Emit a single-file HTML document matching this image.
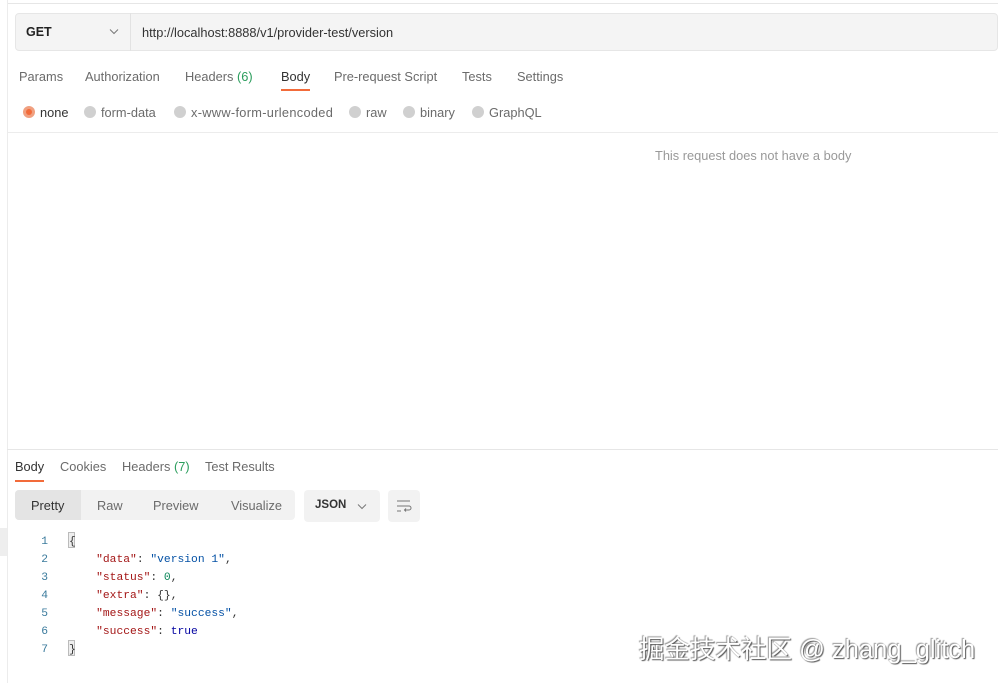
<!DOCTYPE html>
<html><head><meta charset="utf-8"><style>
*{box-sizing:border-box;margin:0;padding:0}
body{width:998px;height:683px;background:#fff;font-family:"Liberation Sans","Noto Sans CJK SC",sans-serif;font-size:12.8px;color:#6b6b6b;position:relative;overflow:hidden}
.a{position:absolute;white-space:nowrap}
.radio{position:absolute;width:12px;height:12px;border-radius:50%;background:#d0d0d0;top:106px}
.mono{font-family:"Liberation Mono","DejaVu Sans Mono",monospace;font-size:11.3px}
</style></head><body>
<div class="a" style="left:7px;top:3px;width:991px;height:1px;background:#e6e6e6"></div>
<div class="a" style="left:7px;top:0;width:1px;height:683px;background:#ececec"></div>
<div class="a" style="left:15px;top:13px;width:983px;height:38px;background:#f4f4f4;border:1px solid #e6e6e6;border-radius:4px"></div>
<div class="a" style="left:130px;top:13px;width:1px;height:38px;background:#e2e2e2"></div>
<div class="a" style="left:26px;top:25px;color:#222;font-weight:bold;font-size:12.5px">GET</div>
<svg class="a" style="left:109px;top:28px" width="10" height="7"><path d="M1 1.5L5 5.5L9 1.5" fill="none" stroke="#777" stroke-width="1"/></svg>
<div class="a" style="left:142px;top:25px;color:#333">http://localhost:8888/v1/provider-test/version</div>
<div class="a" style="left:19px;top:69px">Params</div>
<div class="a" style="left:85px;top:69px">Authorization</div>
<div class="a" style="left:185px;top:69px">Headers <span style="color:#2a9d5c">(6)</span></div>
<div class="a" style="left:281px;top:69px;color:#333">Body</div>
<div class="a" style="left:281px;top:89px;width:29px;height:2px;background:#f26b3a"></div>
<div class="a" style="left:334px;top:69px">Pre-request Script</div>
<div class="a" style="left:462px;top:69px">Tests</div>
<div class="a" style="left:517px;top:69px">Settings</div>
<div class="radio" style="left:23px;background:#f0a080"><div style="margin:3px;width:6px;height:6px;border-radius:50%;background:#f26b3a"></div></div>
<div class="a" style="left:40px;top:105px;color:#333">none</div>
<div class="radio" style="left:84px"></div><div class="a" style="left:101px;top:105px">form-data</div>
<div class="radio" style="left:174px"></div><div class="a" style="left:191px;top:105px;letter-spacing:0.3px">x-www-form-urlencoded</div>
<div class="radio" style="left:349px"></div><div class="a" style="left:366px;top:105px">raw</div>
<div class="radio" style="left:403px"></div><div class="a" style="left:420px;top:105px">binary</div>
<div class="radio" style="left:472px"></div><div class="a" style="left:489px;top:105px">GraphQL</div>
<div class="a" style="left:7px;top:132px;width:991px;height:1px;background:#ececec"></div>
<div class="a" style="left:655px;top:148px;color:#999">This request does not have a body</div>
<div class="a" style="left:7px;top:449px;width:991px;height:1px;background:#e6e6e6"></div>
<div class="a" style="left:15px;top:459px;color:#333">Body</div>
<div class="a" style="left:15px;top:480px;width:29px;height:2px;background:#f26b3a"></div>
<div class="a" style="left:60px;top:459px">Cookies</div>
<div class="a" style="left:122px;top:459px">Headers <span style="color:#2a9d5c">(7)</span></div>
<div class="a" style="left:205px;top:459px">Test Results</div>
<div class="a" style="left:15px;top:490px;width:280px;height:30px;background:#f2f2f2;border-radius:4px"></div>
<div class="a" style="left:15px;top:490px;width:66px;height:30px;background:#e4e4e4;border-radius:4px 0 0 4px"></div>
<div class="a" style="left:31px;top:498px;color:#333">Pretty</div>
<div class="a" style="left:97px;top:498px">Raw</div>
<div class="a" style="left:153px;top:498px">Preview</div>
<div class="a" style="left:231px;top:498px">Visualize</div>
<div class="a" style="left:304px;top:490px;width:76px;height:32px;background:#f2f2f2;border-radius:4px"></div>
<div class="a" style="left:315px;top:499px;color:#333;font-weight:bold;font-size:11.5px">JSON</div>
<svg class="a" style="left:357px;top:503px" width="10" height="7"><path d="M1 1.5L5 5.5L9 1.5" fill="none" stroke="#777" stroke-width="1"/></svg>
<div class="a" style="left:388px;top:490px;width:32px;height:32px;background:#f2f2f2;border-radius:4px"></div>
<svg class="a" style="left:396px;top:499px" width="16" height="14"><path d="M1 2H14M1 7H13a2 2 0 0 1 0 4H9M10 9.5L8.5 11L10 12.5M1 12H5" fill="none" stroke="#777" stroke-width="1"/></svg>
<div class="a" style="left:0;top:528px;width:7px;height:28px;background:#eee"></div>
<div class="a mono" style="left:38px;top:533px;line-height:18px;color:#3a7a9c;text-align:right;width:10px">1<br>2<br>3<br>4<br>5<br>6<br>7</div>
<div class="a" style="left:68px;top:532px;width:7px;height:16px;border:1px solid #bbb;background:#eee"></div>
<div class="a" style="left:68px;top:640px;width:7px;height:16px;border:1px solid #bbb;background:#eee"></div>
<div class="a mono" style="left:69px;top:533px;line-height:18px;color:#333">{<br>
&nbsp;&nbsp;&nbsp;&nbsp;<span style="color:#a31515">"data"</span>: <span style="color:#0451a5">"version 1"</span>,<br>
&nbsp;&nbsp;&nbsp;&nbsp;<span style="color:#a31515">"status"</span>: <span style="color:#098658">0</span>,<br>
&nbsp;&nbsp;&nbsp;&nbsp;<span style="color:#a31515">"extra"</span>: {},<br>
&nbsp;&nbsp;&nbsp;&nbsp;<span style="color:#a31515">"message"</span>: <span style="color:#0451a5">"success"</span>,<br>
&nbsp;&nbsp;&nbsp;&nbsp;<span style="color:#a31515">"success"</span>: <span style="color:#0000a0">true</span><br>}</div>
<div class="a" style="left:639px;top:629px;font-size:25.5px;color:#fff;text-shadow:1px 1px 1px #555,-1px -1px 1px #999;font-family:'Liberation Sans','Noto Sans CJK SC',sans-serif">掘金技术社区 @ zhang_glitch</div>
</body></html>
